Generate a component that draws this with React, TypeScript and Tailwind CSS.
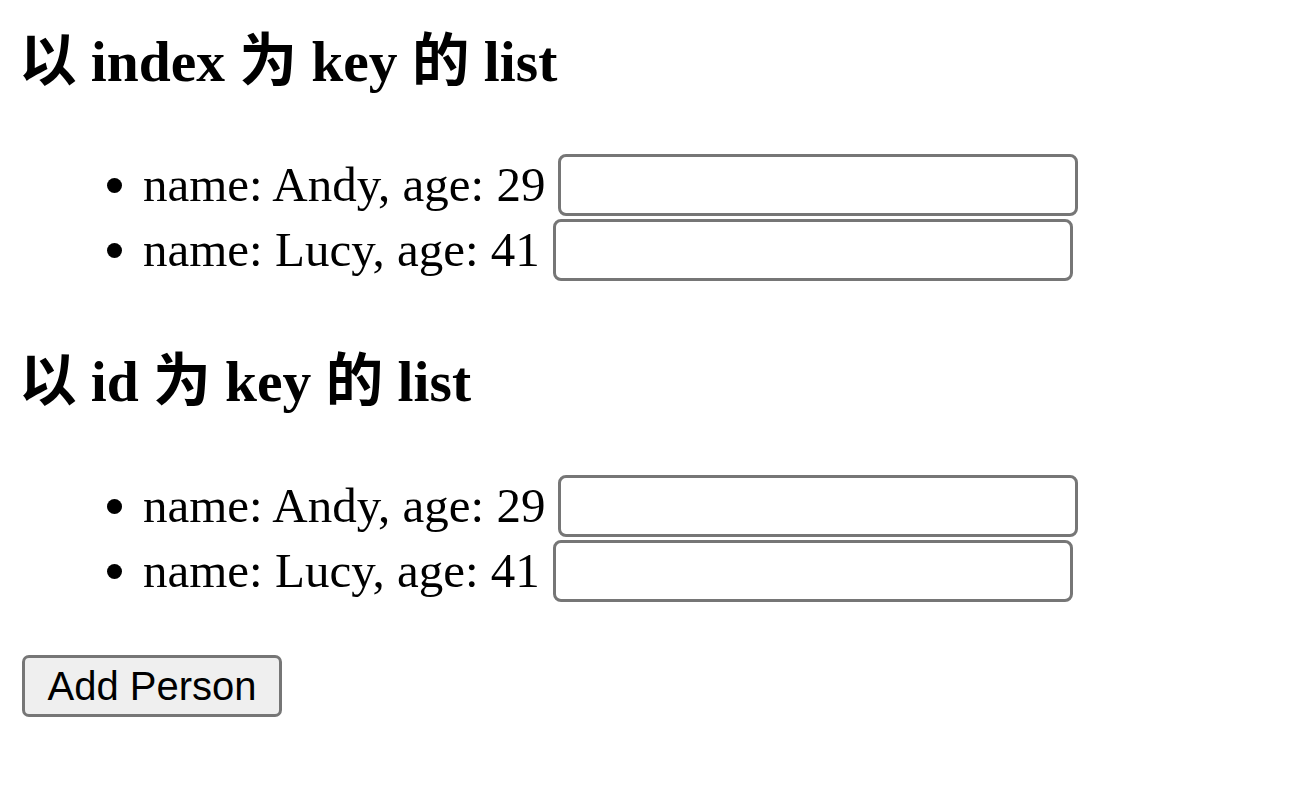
import { useState } from "react";

type Person = { id: number; name: string; age: number };

const initial: Person[] = [
  { id: 1, name: "Andy", age: 29 },
  { id: 2, name: "Lucy", age: 41 },
];

const PersonList = ({ people }: { people: Person[] }) => {
  return (
    <ul className="pl-[85px] flex flex-col gap-[3px]">
      {people.map((p) => (
        <li key={p.id} className="flex items-center h-[62px]">
          <span className="w-[15px] h-[15px] rounded-full bg-black mr-[21px] shrink-0" />
          <span className="text-[49px] leading-[56px] whitespace-nowrap">
            name: {p.name}, age: {p.age}
          </span>
          <input
            type="text"
            className="ml-[13px] w-[520px] h-[62px] border-[3px] border-[#767676] rounded-[8px] bg-white px-[6px] text-[40px] font-['Liberation_Sans',Arial,sans-serif] outline-none"
          />
        </li>
      ))}
    </ul>
  );
};

export default function App() {
  const [people, setPeople] = useState<Person[]>(initial);

  const addPerson = () => {
    setPeople((prev) => [
      ...prev,
      { id: prev.length + 1, name: "New", age: 20 },
    ]);
  };

  return (
    <div className="min-h-screen bg-white text-black font-['Liberation_Serif','Noto_Sans_CJK_SC',serif] px-[22px] pt-[30px]">
      <h3 className="text-[57.5px] leading-[64px] font-bold -ml-[3px]">以 index 为 key 的 list</h3>
      <div className="mt-[60px]">
        <PersonList people={people} />
      </div>

      <h3 className="mt-[69px] text-[57.5px] leading-[64px] font-bold -ml-[3px]">以 id 为 key 的 list</h3>
      <div className="mt-[61px]">
        <PersonList people={people} />
      </div>

      <button
        onClick={addPerson}
        className="mt-[53px] w-[260px] h-[62px] bg-[#efefef] border-[3px] border-[#767676] rounded-[7px] text-[40px] leading-[46px] font-['Liberation_Sans',Arial,sans-serif] text-black"
      >
        Add Person
      </button>
    </div>
  );
}
